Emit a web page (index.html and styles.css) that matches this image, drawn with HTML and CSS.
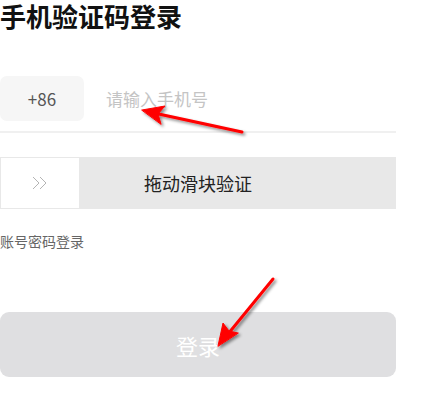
FILE: index.html
```html
<!DOCTYPE html>
<html lang="zh-CN">
<head>
  <meta charset="UTF-8">
  <meta name="viewport" content="width=device-width, initial-scale=1.0">
  <title>手机验证码登录</title>
  <link rel="stylesheet" href="styles.css">
</head>
<body>
  <div class="page">
    <h1 class="title">手机验证码登录</h1>

    <div class="phone-row">
      <div class="area">+86</div>
      <input class="phone" type="text" placeholder="请输入手机号">
    </div>

    <div class="slider">
      <div class="knob">
        <svg width="16" height="14" viewBox="0 0 16 14">
          <path d="M1 1 L7 7 L1 13 M8 1 L14 7 L8 13" fill="none" stroke="#b4b4b4" stroke-width="1"/>
        </svg>
      </div>
      <div class="slider-text">拖动滑块验证</div>
    </div>

    <a class="switch" href="#">账号密码登录</a>

    <button class="login">登录</button>
  </div>

  <!-- annotation arrows -->
  <svg class="marks" width="434" height="415" viewBox="0 0 434 415">
    <defs>
      <filter id="sh" x="-20%" y="-20%" width="140%" height="140%">
        <feDropShadow dx="2" dy="2" stdDeviation="1.5" flood-color="#000" flood-opacity="0.45"/>
      </filter>
    </defs>
    <g filter="url(#sh)" fill="#f00" stroke="#f00" stroke-linecap="round">
      <line x1="242" y1="132" x2="154" y2="113" stroke-width="3"/>
      <polygon points="142,110 165,106 158,114 161,124" stroke-width="1" stroke-linejoin="round"/>
      <line x1="273" y1="279" x2="228" y2="334" stroke-width="3"/>
      <polygon points="218,346 223,323 229,331 238,333" stroke-width="1" stroke-linejoin="round"/>
    </g>
  </svg>
</body>
</html>
```

FILE: styles.css
```css
body {
  margin: 0;
  font-family: "Noto Sans CJK SC", "Noto Sans", sans-serif;
  background: #fff;
}

.page {
  width: 396px;
}

.title {
  margin: 0;
  font-size: 26px;
  line-height: 32px;
  font-weight: bold;
  color: #111;
}

.phone-row {
  display: flex;
  align-items: center;
  gap: 22px;
  margin-top: 44px;
  padding-bottom: 10px;
  border-bottom: 2px solid #f0f0f0;
}

.area {
  width: 84px;
  height: 45px;
  border-radius: 7px;
  background: #f6f6f6;
  color: #555;
  font-size: 17px;
  display: flex;
  align-items: center;
  justify-content: center;
}

.phone {
  flex: 1;
  border: none;
  outline: none;
  font-family: inherit;
  font-size: 17px;
  padding: 0;
  color: #333;
}

.phone::placeholder {
  color: #c4c4c4;
}

.slider {
  margin-top: 24px;
  height: 52px;
  background: #e8e8e8;
  display: flex;
  align-items: center;
  position: relative;
}

.knob {
  width: 78px;
  height: 50px;
  margin-left: 1px;
  background: #fff;
  display: flex;
  align-items: center;
  justify-content: center;
  position: relative;
  z-index: 1;
}

.slider-text {
  position: absolute;
  left: 0;
  right: 0;
  text-align: center;
  font-size: 18px;
  color: #222;
}

.switch {
  display: block;
  margin-top: 22px;
  font-size: 14px;
  line-height: 20px;
  color: #666;
  text-decoration: none;
}

.login {
  display: block;
  width: 396px;
  height: 65px;
  margin-top: 61px;
  border: none;
  border-radius: 9px;
  background: #dfdfe1;
  color: #fff;
  font-family: inherit;
  font-size: 22px;
  cursor: pointer;
}

.marks {
  position: absolute;
  left: 0;
  top: 0;
  pointer-events: none;
}
```
